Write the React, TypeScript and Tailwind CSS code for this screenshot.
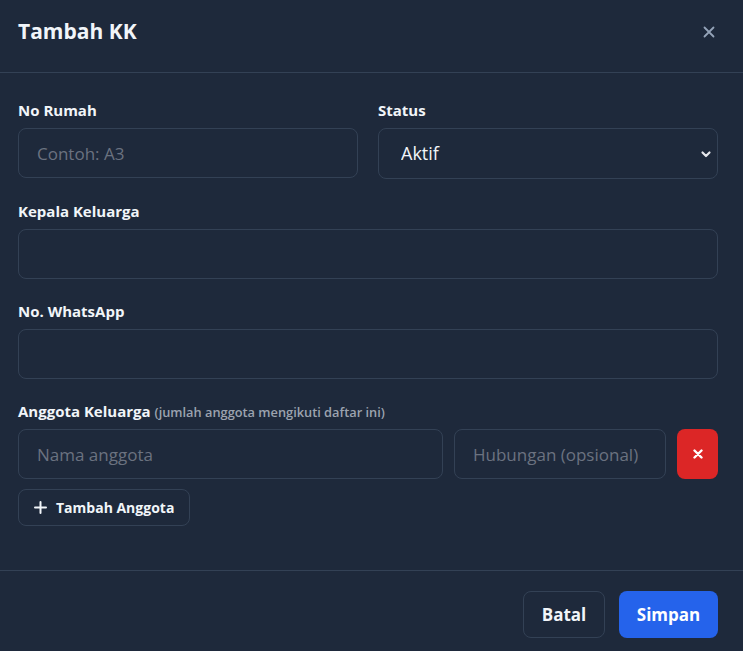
import React from "react";

function Label({ children }: { children: React.ReactNode }) {
  return <div className="mb-2 h-5 text-[15px] font-bold leading-5 text-[#f1f5f9]">{children}</div>;
}

const inputCls =
  "block h-[50px] w-full rounded-lg border border-[#334155] bg-transparent px-[18px] text-[17px] text-[#e5e7eb] placeholder:text-[#6b7280] outline-none";

export default function App() {
  return (
    <div
      className="h-[651px] w-[743px] overflow-hidden bg-[#1e293b] text-white"
      style={{ fontFamily: '"Open Sans", "Noto Sans", sans-serif' }}
    >
      <div className="flex h-[73px] items-center justify-between border-b border-[#334155] pl-[18px] pr-[22px] pb-[8px]">
        <h2 className="text-[21px] font-bold text-[#f1f5f9]">Tambah KK</h2>
        <button className="flex h-6 w-6 items-center justify-center text-[#94a3b8]">
          <svg width="12" height="12" viewBox="0 0 12 12" fill="none" stroke="currentColor" strokeWidth="1.8" strokeLinecap="round">
            <path d="M1.5 1.5 10.5 10.5M10.5 1.5 1.5 10.5" />
          </svg>
        </button>
      </div>

      <div className="pl-[18px] pr-[25px] pt-[27px] pb-[44px]">
        <div className="grid grid-cols-2 items-start gap-5">
          <div>
            <Label>No Rumah</Label>
            <input className={inputCls} placeholder="Contoh: A3" />
          </div>
          <div>
            <Label>Status</Label>
            <div className="relative">
              <select
                className="block h-[51px] w-full appearance-none rounded-lg border border-[#334155] bg-[#1e293b] px-[22px] text-[18px] text-[#f1f5f9] outline-none"
                defaultValue="Aktif"
              >
                <option>Aktif</option>
                <option>Tidak Aktif</option>
              </select>
              <svg
                className="pointer-events-none absolute right-[6px] top-1/2 -translate-y-1/2"
                width="12"
                height="12"
                viewBox="0 0 12 12"
                fill="none"
                stroke="#e5e7eb"
                strokeWidth="2.2"
                strokeLinecap="round"
                strokeLinejoin="round"
              >
                <path d="M2.5 4.5 6 8l3.5-3.5" />
              </svg>
            </div>
          </div>
        </div>

        <div className="mt-[22px]">
          <Label>Kepala Keluarga</Label>
          <input className={inputCls} />
        </div>

        <div className="mt-[22px]">
          <Label>No. WhatsApp</Label>
          <input className={inputCls} />
        </div>

        <div className="mt-[22px]">
          <div className="mb-2 flex h-5 items-baseline gap-1 leading-5">
            <span className="text-[15px] font-bold text-[#f1f5f9]">Anggota Keluarga</span>
            <span className="text-[12.8px] font-semibold text-[#9ca3af]">(jumlah anggota mengikuti daftar ini)</span>
          </div>
          <div className="flex items-stretch gap-[11px]">
            <input className={inputCls + " flex-1"} placeholder="Nama anggota" />
            <input className={inputCls + " !w-[212px] flex-none"} placeholder="Hubungan (opsional)" />
            <button className="flex h-[50px] w-[41px] flex-none items-center justify-center rounded-lg bg-[#dc2626] text-white">
              <svg width="10" height="10" viewBox="0 0 10 10" fill="none" stroke="currentColor" strokeWidth="2.4" strokeLinecap="round">
                <path d="M1.5 1.5 8.5 8.5M8.5 1.5 1.5 8.5" />
              </svg>
            </button>
          </div>
          <button className="mt-[10px] flex h-[37px] items-center gap-[9px] rounded-lg border border-[#334155] pl-[15px] pr-[15px] text-[14px] font-bold text-[#f1f5f9]">
            <svg width="13" height="13" viewBox="0 0 13 13" fill="none" stroke="currentColor" strokeWidth="2" strokeLinecap="round">
              <path d="M6.5 1v11M1 6.5h11" />
            </svg>
            Tambah Anggota
          </button>
        </div>
      </div>

      <div className="flex justify-end gap-[14px] border-t border-[#334155] px-[25px] pt-[20px]">
        <button className="h-[47px] w-[82px] rounded-lg border border-[#334155] text-[17px] font-bold text-[#f1f5f9]">
          Batal
        </button>
        <button className="h-[47px] w-[99px] rounded-lg bg-[#2563eb] text-[17px] font-bold text-white">
          Simpan
        </button>
      </div>
    </div>
  );
}
